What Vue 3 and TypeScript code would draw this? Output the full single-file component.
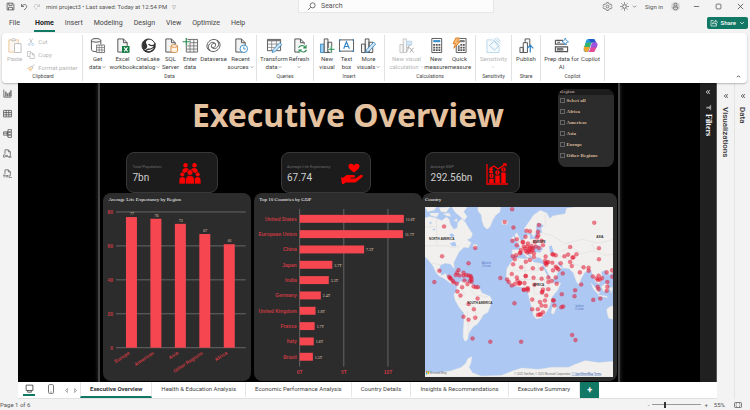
<script setup lang="ts">
import { ref } from 'vue'

interface RibbonItem { icon: string; lines: string[]; caret?: boolean; disabled?: boolean }
interface RibbonGroup { key: string; title: string; items: RibbonItem[] }

const S = '#505050'
const page = `<path d="M3 1h6l4 4v10H3z" fill="#f4f4f4" stroke="${S}"/><path d="M9 1v4h4" fill="none" stroke="${S}"/>`

const icons: Record<string, string> = {
  save: `<path d="M2 2h10l2 2v10H2z" fill="none" stroke="${S}" stroke-width="1.4"/><path d="M5 2v4h6V2M4.500 14V9.500h7V14" fill="none" stroke="${S}" stroke-width="1.4"/>`,
  undo: `<path d="M3 2v5h5M3.500 6.500C6 3 9 2.500 11 3.500c3 1.500 3 5 1 7L8 14" fill="none" stroke="#444" stroke-width="1.4"/>`,
  redo: `<path d="M13 2v5H8M12.500 6.500C10 3 7 2.500 5 3.500c-3 1.500-3 5-1 7L8 14" fill="none" stroke="#bbb" stroke-width="1.4"/>`,
  search: `<circle cx="10" cy="6" r="4.500" fill="none" stroke="#444" stroke-width="1.300"/><path d="M6.500 9.500L1.500 14.500" stroke="#444" stroke-width="1.300"/>`,
  gear: `<path d="M6.500 1h3l.6 2 2.200 1.200 2-.5 1.500 2.600L14.400 8l1.400 1.700-1.500 2.600-2-.5L10.100 13l-.6 2h-3l-.6-2-2.200-1.200-2 .5L.2 9.700 1.600 8 .2 6.300l1.500-2.600 2 .5L5.900 3z" fill="none" stroke="#555" stroke-width="1.200"/><circle cx="8" cy="8" r="2.400" fill="none" stroke="#555" stroke-width="1.200"/>`,
  sun: `<circle cx="8" cy="8" r="3.300" fill="none" stroke="#444" stroke-width="1.300"/><path d="M8 .5v2.500M8 13v2.500M.5 8H3M13 8h2.500M2.700 2.700l1.700 1.700M11.600 11.600l1.700 1.700M2.700 13.300l1.700-1.700M11.600 4.400l1.700-1.700" stroke="#444" stroke-width="1.300"/>`,
  chevron: `<path d="M3 5.500l5 5 5-5" fill="none" stroke="currentColor" stroke-width="2"/>`,
  chevronUp: `<path d="M3 10.500l5-5 5 5" fill="none" stroke="#222" stroke-width="2.400"/>`,
  avatar: `<circle cx="8" cy="8" r="8" fill="#d6d6d6"/><circle cx="8" cy="4.800" r="2.600" fill="none" stroke="#555" stroke-width="1.200"/><path d="M3.800 9h8.400c0 3.500-1.500 4.800-4.200 4.800S3.800 12.500 3.800 9z" fill="none" stroke="#555" stroke-width="1.200"/>`,
  minimise: `<path d="M2 8h12" stroke="#444" stroke-width="1.600"/>`,
  maximise: `<rect x="2.500" y="2.500" width="11" height="11" rx="2" fill="none" stroke="#444" stroke-width="1.600"/>`,
  close: `<path d="M2 2l12 12M14 2L2 14" stroke="#333" stroke-width="1.600"/>`,
  share: `<path d="M7 3H2v11h11v-4M5 10c.5-4 3-5 6-5V2l4 4.500-4 4V8C8.500 8 6.500 8.500 5 10z" fill="none" stroke="#fff" stroke-width="1.300"/>`,
  paste: `<path d="M2 2h10v13H2z" fill="#fdf7ef" stroke="#ecc898"/><path d="M5 2c0-2 4-2 4 0v1H5z" fill="#fff" stroke="#bbb"/><path d="M8 6h7v9.500H8z" fill="#fff" stroke="#bdbdbd"/>`,
  cut: `<path d="M4.500 1l6 10M11.500 1l-6 10" stroke="#aaa" stroke-width="1.200"/><circle cx="4.500" cy="13" r="2" fill="none" stroke="#9cc3e6" stroke-width="1.200"/><circle cx="11.500" cy="13" r="2" fill="none" stroke="#9cc3e6" stroke-width="1.200"/>`,
  copy: `<path d="M6 11H1V1h6v3" fill="none" stroke="#aaa" stroke-width="1.200"/><path d="M6 4h5l3.500 3.500V15H6zM11 4v4h3.500" fill="none" stroke="#aaa" stroke-width="1.200"/>`,
  brush: `<path d="M15 1l-5 5M8 4l4 4-3 2-3-3z" fill="none" stroke="#b9b9b9" stroke-width="1.600"/><path d="M6 6L1 8l6 7 3-5z" fill="#f8ddb8" stroke="#ecc898"/>`,
  getData: `<ellipse cx="6.500" cy="2.500" rx="5" ry="2" fill="#f4f4f4" stroke="${S}"/><path d="M1.500 2.500v10c0 1.200 2 2 5 2M11.500 2.500V7" fill="none" stroke="${S}"/><path d="M7 7.500h8.500V15.500H7z" fill="#fff" stroke="#777"/><path d="M7 10.200h8.500M7 12.800h8.500M9.800 7.500v8M12.600 7.500v8" stroke="#777" stroke-width=".8"/>`,
  excel: page + `<path d="M7.500 8.500h8v7.300h-8z" fill="#107c41"/><path d="M9.800 10l3.600 4.300M13.400 10l-3.600 4.300" stroke="#fff" stroke-width="1.200"/>`,
  oneLake: `<circle cx="8" cy="8" r="7" fill="#fff" stroke="#333"/><path d="M3 12.800C7 11 7.500 9 5.500 5.500 4.500 3.500 7 1.500 9.500 1.200 5 .5 1 4 1.200 8.500c0 2 .8 3.500 1.800 4.300z" fill="#333"/><path d="M7 12c3 0 7-1.500 7.800-5C13 8.500 10 8.500 8 6.500M7 12c-1 1-2 1.500-3 1.600 4 3 10 .6 11-5" fill="none" stroke="#333" stroke-width="1.400"/>`,
  sql: page + `<path d="M8.500 8.500v5.500c0 2 7 2 7 0V8.500z" fill="#fff3e4" stroke="#d98a3d"/><ellipse cx="12" cy="8.500" rx="3.500" ry="1.400" fill="#fff" stroke="#d98a3d"/>`,
  enter: `<path d="M3.500 1.500h12v13.500h-12z" fill="#f5f5f5" stroke="#666"/><path d="M3.500 5h12M3.500 8.400h12M3.500 11.800h12M7.500 1.500V15M11.500 1.500V15" stroke="#666" stroke-width=".8"/><path d="M3.500 0v8M-.5 4h8" stroke="#fff" stroke-width="2.400"/><path d="M3.500 0v8M-.5 4h8" stroke="#2f8f55" stroke-width="1.300"/>`,
  dataverse: `<path d="M10.500 7c-1.800-2.300-5-.8-4.700 1.800.3 2.800 4.200 3.500 6.500.8C15 6.200 12.500 1.500 8.600 1.500 4.500 1.500 1 4.800 1 8.800c0 2.500 1.600 4.200 3.500 4.800M5.500 9c1.800 2.300 5 .8 4.700-1.800C9.900 4.400 6 3.700 3.700 6.400 1 9.800 3.500 14.500 7.400 14.500c4.100 0 7.600-3.300 7.600-7.300 0-2.500-1.600-4.200-3.500-4.800" fill="none" stroke="${S}" stroke-width="1"/>`,
  recent: page + `<circle cx="11.500" cy="11.500" r="4" fill="#fff" stroke="#3b8fc9"/><path d="M11.500 9v2.700h2" fill="none" stroke="#3b8fc9"/>`,
  transform: `<path d="M.5 1.500h14v12H.5z" fill="#fff" stroke="#555"/><path d="M.5 1.500h14v2H.5z" fill="#777"/><path d="M.5 6.500h14M.5 10h14M5 3v10.500M10 3v10.500" stroke="#777" stroke-width=".8"/><path d="M6.500 12.500l7-7.500 2.200 2-7 7.500-3.200 1z" fill="#cfe4f5" stroke="#3b8fc9" stroke-width=".9"/>`,
  refresh: page + `<circle cx="11" cy="11.500" r="5" fill="#fff"/><path d="M7 10.500c1-3 5.500-3.300 7-.5M15 7.500V10.500h-3M15.500 12.500c-1 3-5.500 3.300-7 .5M7.500 15.800v-3h3" fill="none" stroke="#2f8f55" stroke-width="1.200"/>`,
  newVisual: `<path d="M.5 6.500h4v9h-4z" fill="#9ccbee" stroke="#3b8fc9"/><path d="M4.500 1h4v14.500h-4zM8.500 4.500h4v11h-4z" fill="#f4f4f4" stroke="${S}"/><path d="M12 8.500v7M8.500 12h7" stroke="#fff" stroke-width="2.600"/><path d="M12 8.500v7M8.500 12h7" stroke="#2f8f55" stroke-width="1.200"/>`,
  textBox: `<path d="M.5 2h15v12H.5z" fill="#fff" stroke="#555"/><path d="M5 11.500l3-7.500 3 7.500M6 9h4" fill="none" stroke="#2f83c5" stroke-width="1.200"/><path d="M0 1.200h1.600v1.600H0zM14.400 1.200H16v1.600h-1.600zM0 13.200h1.600v1.600H0zM14.400 13.200H16v1.600h-1.600z" fill="#2f83c5"/>`,
  moreVisuals: `<path d="M.5 6.500h4v9h-4zM4.500 1h4v14.500h-4zM8.500 4.500h4v11h-4z" fill="#f4f4f4" stroke="${S}"/><path d="M6 12.500l7.500-8 2.200 2-7.500 8-3.200 1z" fill="#cfe4f5" stroke="#3b8fc9" stroke-width=".9"/>`,
  newCalc: `<path d="M1 7h3.500v8.500H1zM4.500 1H8v14.500H4.500z" fill="#f7f7f7" stroke="#c4c4c4"/><path d="M8 3.500h5.500v4H8z" fill="#d5e7f5" stroke="#b5d4ec"/><path d="M12 8c-2-.5-2 1-2.300 3s-.5 4-2.200 3.500M8.500 10.500h3M11.500 10.500l4 5M15.500 10.500l-4 5" fill="none" stroke="#aaa"/>`,
  calculator: `<path d="M3 .5h10.500v15H3z" fill="#fff" stroke="#555"/><path d="M4.500 2.200h7.500v2.300H4.500z" fill="#3b8fc9"/><path d="M4.500 6.500h2v1.800h-2zM7.300 6.500h2v1.800h-2zM10.100 6.500h2v1.800h-2zM4.500 9.300h2v1.800h-2zM7.300 9.300h2v1.800h-2zM10.100 9.300h2v1.800h-2zM4.500 12.100h2v1.800h-2zM7.300 12.100h2v1.800h-2zM10.100 12.100h2v1.800h-2z" fill="#555"/>`,
  quick: `<path d="M4.500 .5H15v15H4.500z" fill="#fff" stroke="#555"/><path d="M8 2.200h5.500v2.300H8z" fill="#777"/><path d="M6.200 8h2v1.400h-2zM8.900 6.500h2v1.800h-2zM11.600 6.500h2v1.800h-2zM6.200 9.900h2v1.600h-2zM8.900 9.300h2v1.800h-2zM11.600 9.300h2v1.800h-2zM6.200 12.100h2v1.800h-2zM8.900 12.100h2v1.800h-2zM11.600 12.100h2v1.800h-2z" fill="#555"/><path d="M4 0h4L6 4h2.500L2 11l1.500-5H1z" fill="#f9b872" stroke="#dd7a1d" stroke-width=".9"/>`,
  sensitivity: `<path d="M1 2h7l6 8v5.500H1z" fill="#f5fafd" stroke="#b9d8ec"/><path d="M4 8l5-5 5 5-5 5zM9 0l6 6M11.500-.5l4 4" fill="none" stroke="#9fcae6"/>`,
  publish: `<path d="M1 10h3.500v5.500H1zM4.500 5H9v10.500H4.500zM6.500 5V1h5v8" fill="#fafafa" stroke="${S}"/><path d="M12 15.500V8M8.800 11L12 7.700 15.200 11" fill="none" stroke="#2f83c5" stroke-width="1.300"/>`,
  prep: `<path d="M1.500 2.500h8M1.500 2.500v4h12M1.500 9.500h13v5h-13zM3.500 4.500h3" fill="none" stroke="#555" stroke-width="1.200"/><path d="M3 10.500h7v3H3z" fill="#777"/><path d="M12 0l1 2.500L15.500 4 13 5l-1 2.500L11 5 8.500 4 11 2.500z" fill="#fff" stroke="#3b8fc9" stroke-width=".9"/>`,
  copilot: `<path d="M5.500 1h5.300c1.300 0 2 .9 2.300 2l.6 2h-3c-1.200 0-1.900.7-2.300 1.900L6.700 12C6 14 5.300 15 3.800 15H3c-2.300 0-2.700-2-2-4.300l1.900-6.500C3.500 2.200 4 1 5.500 1z" fill="#2b9be0"/><path d="M1 8.500l-.2 3C.8 14 2 15 3.500 15c1.700 0 2.400-1.200 3-3.200L7.700 8z" fill="#f0a52c"/><path d="M3 5L1.500 9.500h5.700L9 4.500z" fill="#35b56b"/><path d="M10.500 15H5.200c1.200-.4 1.800-1.500 2.200-3l1.900-5.500C9.800 5 10.800 4.500 12 4.500h1c2.300 0 2.700 2 2 4.300l-1.900 4C12.500 14.500 12 15 10.500 15z" fill="#e4489a"/><path d="M12 4.500h1c2.500 0 2.700 2 2 4.300l-.6 1.200H8.200l1.200-3.500C9.800 5 10.800 4.500 12 4.500z" fill="#9a55dd"/><path d="M6 1h4.800c1.300 0 2 .9 2.300 2l.5 1.600H8z" fill="#2458c9"/>`,
  report: `<path d="M1.500 1v13.500h13" fill="none" stroke="#555" stroke-width="1.400"/><path d="M4 5h2v8H4zM7.300 8h2v5h-2zM10.600 6h1.600v7h-1.600zM13 2.500h2V13h-2z" fill="#777" stroke="#555" stroke-width=".5"/>`,
  table: `<path d="M1 2.500h14v11.500H1zM1 6.300h14M1 10.200h14M5.700 2.500V14M10.300 2.500V14" fill="none" stroke="#555" stroke-width="1.400"/>`,
  model: `<path d="M1 5h6v6H1zM9 1h6v4H9zM9 6h6v4H9zM9 11h6v4H9zM1 7.500h6M7 8h2M8 3v10h1" fill="none" stroke="#555" stroke-width="1.300"/>`,
  dax: `<path d="M3.500 9V1.500h6L13 5v9H9M9.500 1.500V5H13" fill="none" stroke="#555" stroke-width="1.300"/><path d="M1 10.500h2c2 0 2 4 0 4H1zM5.500 14.500l1.500-4 1.500 4M10 14.500h5" fill="none" stroke="#555" stroke-width="1.200"/>`,
  tmdl: `<path d="M3.500 9V1.500h6L13 5v7M9.500 1.500V5H13" fill="none" stroke="#555" stroke-width="1.300"/><path d="M0 11h4M2 11v4M5.500 15v-4l1.500 2 1.500-2v4M11 11v4h4.500" fill="none" stroke="#555" stroke-width="1.200"/>`,
  monitor: `<path d="M2 2h12v9.500H2zM5.500 11.500L4.500 14.500h7l-1-3" fill="none" stroke="#444" stroke-width="1.500"/>`,
  phone: `<rect x="4" y="1" width="8" height="14" rx="1.500" fill="#fff" stroke="#777" stroke-width="1.600"/><path d="M6.500 12.800h3" stroke="#777"/>`,
  left: `<path d="M10 3.500L5.500 8l4.500 4.500z" fill="none" stroke="#777" stroke-width="1.400"/>`,
  right: `<path d="M6 3.500L10.500 8 6 12.500z" fill="none" stroke="#777" stroke-width="1.400"/>`,
  collapse: `<path d="M8 3L3.500 8 8 13M13 3L8.500 8l4.500 5" fill="none" stroke="currentColor" stroke-width="2"/>`,
  filter: `<path d="M14 1v14L9 10H3V6h6z" fill="#999"/>`,
  fit: `<rect x="1" y="3" width="14" height="10" rx="1.500" fill="none" stroke="#555" stroke-width="1.500"/><path d="M4 7V5.500h2M12 7V5.500h-2M4 9v1.500h2M12 9v1.500h-2" fill="none" stroke="#555" stroke-width="1.200"/>`,
  people: `<g fill="#f00"><circle cx="6.500" cy="2.300" r="2.200"/><circle cx="15.500" cy="2.300" r="2.200"/><path d="M3 11c0-4 1-6 3.500-6S10 6 10.500 8zM19 11c0-4-1-6-3.500-6S12 6 11.500 8z"/></g><g fill="#f00" stroke="#1c1c1c" stroke-width=".7"><circle cx="3.300" cy="11.500" r="2.400"/><circle cx="18.700" cy="11.500" r="2.400"/><path d="M0 21v-3c0-3 1.200-4.300 3.300-4.300S7 15 7 18v3zM15 21v-3c0-3 1.600-4.300 3.700-4.300S22 15 22 18v3z"/><circle cx="11" cy="9.500" r="2.900"/><path d="M6.500 21v-3.500c0-3.500 1.500-5 4.500-5s4.500 1.500 4.500 5V21z"/></g>`,
  heartHand: `<path d="M13 9.500C9 6.500 7.500 5 7.500 3.200 7.500.5 11.500 0 13 2.500 14.500 0 18.500.5 18.500 3.200c0 1.800-1.500 3.300-5.500 6.300z" fill="#f00"/><path d="M0 14.500h2.500l3-2.500h7c2 0 2 2.600 0 2.600H9.500v.8h5l5-3.400c1.500-1 3.200.8 1.900 2l-6 4.800c-.8.600-1.500.8-2.500.8H4.500L2.500 21H1z" fill="#f00"/>`,
  gdp: `<g fill="none" stroke="#f00" stroke-width="1.300"><path d="M1 1v20h21"/><path d="M4 5.500l4-2.500 4 3L20 1M17 1h3v2.500"/></g><g fill="#f00"><circle cx="5" cy="6.300" r="1.800"/><path d="M3 10V9c0-2 4-2 4 0v1z"/><circle cx="5.500" cy="12.800" r="2.200"/><circle cx="11.500" cy="9.500" r="2.200"/><circle cx="17.500" cy="6.500" r="2.200"/><path d="M3.300 15.700h4.400V20H3.300zM9.300 12.500h4.400V20H9.300zM15.300 9.500h4.400V20h-4.400z"/></g><g stroke="#1c1c1c" stroke-width=".7"><path d="M5.500 11.500v2.600M11.500 8.200v2.600M17.500 5.200v2.600"/></g>`,
}

const menu = ['File', 'Home', 'Insert', 'Modeling', 'Design', 'View', 'Optimize', 'Help']
const activeMenu = ref('Home')

const clipboard = [
  { icon: 'cut', label: 'Cut' },
  { icon: 'copy', label: 'Copy' },
  { icon: 'brush', label: 'Format painter' },
]

const groups: RibbonGroup[] = [
  { key: 'data', title: 'Data', items: [
    { icon: 'getData', lines: ['Get', 'data'], caret: true },
    { icon: 'excel', lines: ['Excel', 'workbook'] },
    { icon: 'oneLake', lines: ['OneLake', 'catalog'], caret: true },
    { icon: 'sql', lines: ['SQL', 'Server'] },
    { icon: 'enter', lines: ['Enter', 'data'] },
    { icon: 'dataverse', lines: ['Dataverse'] },
    { icon: 'recent', lines: ['Recent', 'sources'], caret: true },
  ] },
  { key: 'queries', title: 'Queries', items: [
    { icon: 'transform', lines: ['Transform', 'data'], caret: true },
    { icon: 'refresh', lines: ['Refresh', ''], caret: true },
  ] },
  { key: 'insert', title: 'Insert', items: [
    { icon: 'newVisual', lines: ['New', 'visual'] },
    { icon: 'textBox', lines: ['Text', 'box'] },
    { icon: 'moreVisuals', lines: ['More', 'visuals'], caret: true },
  ] },
  { key: 'calc', title: 'Calculations', items: [
    { icon: 'newCalc', lines: ['New visual', 'calculation'], caret: true, disabled: true },
    { icon: 'calculator', lines: ['New', 'measure'] },
    { icon: 'quick', lines: ['Quick', 'measure'] },
  ] },
  { key: 'sens', title: 'Sensitivity', items: [
    { icon: 'sensitivity', lines: ['Sensitivity', ''], caret: true, disabled: true },
  ] },
  { key: 'publish', title: 'Share', items: [{ icon: 'publish', lines: ['Publish'] }] },
  { key: 'copilot', title: 'Copilot', items: [
    { icon: 'prep', lines: ['Prep data for', 'AI'] },
    { icon: 'copilot', lines: ['Copilot'] },
  ] },
]

const views = [
  { icon: 'report', label: 'Report view' },
  { icon: 'table', label: 'Table view' },
  { icon: 'model', label: 'Model view' },
  { icon: 'dax', label: 'DAX query view' },
  { icon: 'tmdl', label: 'TMDL view' },
]

const cards = [
  { key: 'pop', label: 'Total Population', value: '7bn', icon: 'people' },
  { key: 'life', label: 'Average Life Expectancy', value: '67.74', icon: 'heartHand' },
  { key: 'gdp', label: 'Average GDP', value: '292.56bn', icon: 'gdp' },
]

const regions = ['Select all', 'Africa', 'Americas', 'Asia', 'Europe', 'Other Regions']

const lifeByRegion = [
  { name: 'Europe', value: 77 },
  { name: 'Americas', value: 76 },
  { name: 'Asia', value: 73 },
  { name: 'Other Regions', value: 67 },
  { name: 'Africa', value: 61 },
]
const lifeTicks = [80, 60, 40, 20, 0]
const lifeY = (v: number) => 155 - v * 1.7
const lifeX = (i: number) => 23 + i * 24.5

const gdpByCountry = [
  { name: 'United States', value: 11.8 },
  { name: 'European Union', value: 11.7 },
  { name: 'China', value: 7.3 },
  { name: 'Japan', value: 3.7 },
  { name: 'India', value: 3.3 },
  { name: 'Germany', value: 2.4 },
  { name: 'United Kingdom', value: 1.8 },
  { name: 'France', value: 1.7 },
  { name: 'Italy', value: 1.6 },
  { name: 'Brazil', value: 1.5 },
]
const gdpTicks = [0, 5, 10]
const gdpX = (v: number) => 46 + v * 8.9
const gdpY = (i: number) => 22 + i * 15.45

const land = [
  'M0 34L14 28 34 32 52 40 66 30 74 36 78 52 88 66 98 62 100 46 112 34 124 48 132 62 144 80 140 92 128 98 140 106 132 122 118 120 104 134 96 150 88 166 90 184 84 178 78 170 62 168 48 174 44 190 52 204 64 198 68 208 76 214 82 226 92 228 90 234 76 226 60 214 44 206 34 194 26 176 12 158 0 146Z',
  'M2 0L36 0 30 10 10 14ZM44 2L76 0 66 16 50 14ZM82 0L128 0 118 14 128 28 120 40 104 26 92 16ZM16 18L44 18 38 30 20 26ZM56 20L74 18 80 28 66 26ZM88 40L98 34 98 44Z',
  'M160 0L228 0 226 14 212 26 204 40 196 60 188 66 178 58 172 42 170 24 160 12Z',
  'M230 44L240 38 250 44 246 52 234 52Z',
  'M146 112L158 112 156 122 146 120ZM96 192L116 198 130 206 120 204 104 198Z',
  'M98 232L108 222 122 222 136 226 150 236 166 244 172 256 196 266 202 276 198 294 190 314 176 322 168 336 158 350 148 356 138 368 132 380 130 394 122 402 116 390 116 370 118 340 118 316 104 300 92 278 88 262 96 250Z',
  'M0 492L40 494 80 488 110 478 124 466 130 452 142 446 140 462 134 478 144 494 170 504 230 502 260 490 290 480 340 484 380 478 430 478 452 468 480 458 520 464 564 460 564 507 0 507Z',
  'M246 184L262 160 272 152 300 154 318 152 326 164 346 168 358 172 370 196 378 212 388 228 408 226 398 248 380 270 376 292 366 312 350 330 334 334 326 324 320 300 312 270 308 252 296 240 270 236 254 226 244 208Z',
  'M390 290L394 300 386 320 378 316 382 298Z',
  'M262 144L262 128 284 126 286 116 276 108 288 102 300 94 304 84 314 82 316 96 334 94 340 80 352 76 348 64 356 56 346 48 336 54 334 74 326 90 318 76 306 78 298 64 308 50 326 24 346 10 366 18 374 34 384 26 420 20 424 4 450 0 564 0 564 196 548 202 540 188 528 194 532 214 520 230 510 222 502 202 496 186 478 196 468 214 462 232 454 224 444 196 432 184 416 182 402 186 392 212 372 220 366 190 358 166 346 152 336 150 328 158 316 144 304 126 308 142 316 150 306 150 290 132 282 146Z',
  'M274 96L270 84 276 76 284 92 288 102 274 104ZM262 88L270 90 266 98 260 98Z',
  'M496 226L508 238 524 258 518 260 504 244ZM520 262L546 266 546 270 520 266ZM528 236L546 226 550 248 534 252ZM552 240L562 240 558 258Z',
  'M544 304L556 296 564 294 564 336 550 332 546 320Z',
]
const water = [
  'M316 118L340 114 354 124 346 136 328 134ZM336 48L342 46 340 70 334 66ZM372 118L380 114 386 134 380 142 374 130Z',
  'M350 172L356 174 378 214 372 214ZM398 162L414 178 410 182 398 170Z',
  'M74 82L82 78 90 84 84 92ZM14 46L22 44 20 52ZM24 66L34 64 30 70ZM76 108L92 104 96 116 84 118Z',
]
const borders = [
  'M0 116H70L86 122 106 118 M22 168L48 172 M0 60L30 58 M36 32L38 116',
  'M106 232L120 260 100 276 M138 244L150 262 190 268 M118 290L146 296 158 330 134 352 M128 310L132 380',
  'M258 190L340 190 340 160 M300 154V240 M280 216H380 M318 216L330 260 366 262 M312 282H356 M334 300V330 M358 216L364 250',
  'M346 76L380 84 420 110 470 96 520 108 564 96 M410 130L440 120 470 140 500 130 540 144 564 140 M420 150L448 170 480 182 M300 108L340 104 M382 152L410 148 M500 110L510 130 M360 20L362 60',
]

const points: number[][] = [
  [59, 58], [53, 147], [45, 190], [30, 224], [152, 122], [132, 168], [94, 203], [102, 188], [117, 196], [117, 204], [105, 204], [98, 196], [74, 208], [79, 214], [85, 220], [77, 212], [88, 225], [97, 229], [125, 203], [132, 204], [138, 206], [140, 210], [141, 216], [136, 221], [141, 223], [120, 219], [129, 230], [113, 239], [147, 237], [154, 239], [160, 239], [99, 252], [108, 264], [159, 273], [132, 289], [148, 305], [117, 327], [132, 336], [152, 330], [144, 392], [197, 402], [289, 402], [269, 287], [227, 212], [240, 45], [262, 7], [266, 61], [263, 101], [276, 96], [276, 114], [264, 147], [270, 156], [265, 171], [289, 180], [303, 163], [247, 216], [252, 224], [261, 200], [261, 234], [276, 210], [278, 220], [270, 230], [282, 229], [286, 226], [297, 247], [302, 206], [305, 71], [302, 89], [294, 104], [285, 138], [274, 144],
  [315, 72], [342, 54], [339, 74], [340, 84], [337, 91], [294, 106], [309, 109], [320, 116], [297, 118], [312, 126], [322, 129], [332, 118], [330, 104], [350, 101], [354, 114], [342, 122], [302, 131], [287, 136], [307, 136], [317, 134], [327, 138], [327, 149], [308, 118], [316, 122], [324, 124], [312, 132], [300, 124], [288, 128], [362, 148], [382, 141], [392, 144], [385, 142], [315, 158], [370, 164], [360, 161], [364, 172], [362, 168], [366, 166], [382, 166], [384, 189], [392, 178], [400, 186], [396, 182], [407, 168], [413, 198], [350, 184], [324, 183], [303, 206], [326, 211], [350, 214], [370, 210], [370, 224], [380, 221], [392, 210], [395, 229], [285, 227], [299, 227], [370, 245], [354, 246], [351, 255], [352, 253], [364, 264], [297, 247], [309, 249], [307, 244], [309, 242], [329, 232], [322, 276], [360, 279], [345, 283], [350, 294], [362, 295], [384, 278], [386, 279], [388, 294], [409, 299], [414, 297], [322, 305], [339, 305], [354, 314], [339, 322], [348, 321], [344, 320], [410, 260], [450, 248], [448, 266], [468, 231], [504, 277], [525, 273], [441, 382], [451, 397], [507, 47], [435, 119], [429, 142], [418, 147], [445, 150], [442, 151], [435, 164], [454, 141], [440, 176], [521, 123], [521, 156], [464, 195], [475, 180], [490, 181], [490, 190], [503, 207], [514, 213], [520, 205], [524, 216], [518, 218], [530, 212], [544, 195], [560, 189], [561, 208], [546, 224], [546, 238], [544, 250], [517, 238], [520, 245],
]

const pages = ['Executive Overview', 'Health & Education Analysis', 'Economic Performance Analysis', 'Country Details', 'Insights & Recommendations', 'Executive Summary']
const activePage = ref(pages[0])
const zoom = ref(55)
</script>

<template>
  <div class="app">
    <header class="titlebar">
      <div class="quick">
        <button class="icon-btn" aria-label="Save"><svg class="ic9" viewBox="0 0 16 16" v-html="icons.save" /></button>
        <button class="icon-btn" aria-label="Undo"><svg class="ic8" viewBox="0 0 16 16" v-html="icons.undo" /></button>
        <button class="icon-btn" aria-label="Redo"><svg class="ic8" viewBox="0 0 16 16" v-html="icons.redo" /></button>
        <span class="doc">mini project3 • Last saved: Today at 12:54 PM</span>
        <span class="doc-caret">▽</span>
      </div>
      <label class="search">
        <svg class="ic9" viewBox="0 0 16 16" v-html="icons.search" />
        <input type="text" placeholder="Search" aria-label="Search">
      </label>
      <div class="account">
        <button class="icon-btn" aria-label="Settings"><svg class="ic9" viewBox="0 0 16 16" v-html="icons.gear" /></button>
        <button class="icon-btn theme" aria-label="Theme">
          <svg class="ic9" viewBox="0 0 16 16" v-html="icons.sun" /><svg class="ic5" viewBox="0 0 16 16" v-html="icons.chevron" />
        </button>
        <button class="icon-btn">Sign in</button>
        <svg class="ic9" viewBox="0 0 16 16" v-html="icons.avatar" />
      </div>
      <div class="window">
        <button class="icon-btn" aria-label="Minimise"><svg class="ic7" viewBox="0 0 16 16" v-html="icons.minimise" /></button>
        <button class="icon-btn" aria-label="Maximise"><svg class="ic7" viewBox="0 0 16 16" v-html="icons.maximise" /></button>
        <button class="icon-btn" aria-label="Close"><svg class="ic7" viewBox="0 0 16 16" v-html="icons.close" /></button>
      </div>
    </header>

    <nav class="menubar">
      <button v-for="m in menu" :key="m" class="menu" :class="{ active: m === activeMenu }" @click="activeMenu = m">{{ m }}</button>
      <button class="share"><svg class="ic8" viewBox="0 0 16 16" v-html="icons.share" />Share<svg class="ic6" viewBox="0 0 16 16" v-html="icons.chevron" /></button>
    </nav>

    <section class="ribbon">
      <div class="group clip">
        <div class="clip-body">
          <button class="paste" disabled><svg class="ic15" viewBox="0 0 16 16" v-html="icons.paste" />Paste</button>
          <div class="clip-list">
            <button v-for="c in clipboard" :key="c.label" class="clip-item" disabled>
              <svg class="ic8" viewBox="0 0 16 16" v-html="icons[c.icon]" />{{ c.label }}
            </button>
          </div>
        </div>
        <span class="group-title">Clipboard</span>
      </div>
      <div v-for="g in groups" :key="g.key" class="group" :class="g.key">
        <div class="items">
          <button v-for="it in g.items" :key="it.icon" class="item" :disabled="it.disabled">
            <svg class="ic15" viewBox="0 0 16 16" v-html="icons[it.icon]" />
            <span v-for="(l, i) in it.lines" :key="i" class="line">{{ l }}<svg v-if="it.caret && i === it.lines.length - 1" class="ic4" viewBox="0 0 16 16" v-html="icons.chevron" /></span>
          </button>
        </div>
        <span class="group-title">{{ g.title }}</span>
      </div>
      <button class="icon-btn collapse-ribbon" aria-label="Collapse ribbon"><svg class="ic5" viewBox="0 0 16 16" v-html="icons.chevronUp" /></button>
    </section>

    <div class="body">
      <aside class="rail">
        <button v-for="v in views" :key="v.icon" class="icon-btn" :aria-label="v.label"><svg class="ic9" viewBox="0 0 16 16" v-html="icons[v.icon]" /></button>
      </aside>

      <div class="center">
        <div class="stage">
          <div class="workspace">
            <main class="report">
              <div class="top">
                <div class="lead">
                  <h1>Executive Overview</h1>
                  <div class="cards">
                    <div v-for="c in cards" :key="c.key" class="card" :class="c.key">
                      <div class="card-text">
                        <span class="card-label">{{ c.label }}</span>
                        <span class="card-value">{{ c.value }}</span>
                      </div>
                      <svg class="ic22" viewBox="0 0 22 22" v-html="icons[c.icon]" />
                    </div>
                  </div>
                </div>
                <fieldset class="slicer">
                  <legend>Region</legend>
                  <label v-for="r in regions" :key="r"><input type="checkbox">{{ r }}</label>
                </fieldset>
              </div>

              <div class="panels">
                <section class="panel life-panel">
                  <h2>Average Life Expectancy by Region</h2>
                  <svg class="chart" viewBox="0 0 148 188">
                    <g v-for="t in lifeTicks" :key="t">
                      <line x1="13" x2="143" :y1="lifeY(t)" :y2="lifeY(t)" class="grid" />
                      <text x="10" :y="lifeY(t) + 2" class="axis end">{{ t }}</text>
                    </g>
                    <g v-for="(d, i) in lifeByRegion" :key="d.name">
                      <rect :x="lifeX(i)" :y="lifeY(d.value)" width="11" :height="155 - lifeY(d.value)" class="bar" />
                      <text :x="lifeX(i) + 6" :y="lifeY(d.value) - 2" class="value mid">{{ d.value }}</text>
                      <text :transform="`translate(${lifeX(i) + 4} 161) rotate(-34)`" class="axis end">{{ d.name }}</text>
                    </g>
                  </svg>
                </section>
                <section class="panel gdp-panel">
                  <h2>Top 10 Countries by GDP</h2>
                  <svg class="chart" viewBox="0 0 169 188">
                    <g v-for="t in gdpTicks" :key="t">
                      <line :x1="gdpX(t)" :x2="gdpX(t)" y1="16" y2="175" class="grid" />
                      <text :x="gdpX(t)" y="182" class="axis mid">{{ t }}T</text>
                    </g>
                    <g v-for="(d, i) in gdpByCountry" :key="d.name">
                      <text x="43" :y="gdpY(i) + 6" class="axis end">{{ d.name }}</text>
                      <rect :x="gdpX(0)" :y="gdpY(i)" :width="gdpX(d.value) - gdpX(0)" height="8" class="bar" />
                      <text :x="gdpX(d.value) + 2" :y="gdpY(i) + 6" class="value">{{ d.value }}T</text>
                    </g>
                  </svg>
                </section>
                <section class="panel map-panel">
                  <h2>Country</h2>
                  <svg class="map" viewBox="0 0 564 507" preserveAspectRatio="xMidYMid slice">
                    <rect width="564" height="507" fill="#adc8f2" />
                    <path v-for="(p, i) in land" :key="i" :d="p" class="land" />
                    <path v-for="(p, i) in water" :key="i" :d="p" fill="#adc8f2" />
                    <path v-for="(p, i) in borders" :key="i" :d="p" class="border" />
                    <circle v-for="(p, i) in points" :key="i" :cx="p[0]" :cy="p[1]" r="6" class="point" />
                    <text x="52" y="99" class="continent">NORTH AMERICA</text>
                    <text x="166" y="289" class="continent">SOUTH AMERICA</text>
                    <text x="343" y="108" class="continent">EUROPE</text>
                    <text x="341" y="236" class="continent">AFRICA</text>
                    <text x="524" y="93" class="continent">ASIA</text>
                    <text x="186" y="170" class="ocean">Atlantic</text>
                    <text x="186" y="180" class="ocean">Ocean</text>
                    <text x="463" y="298" class="ocean">Indian</text>
                    <text x="463" y="308" class="ocean">Ocean</text>
                    <g><path d="M5 490h4v4H5z" fill="#f25022" /><path d="M10 490h4v4h-4z" fill="#7fba00" /><path d="M5 495h4v4H5z" fill="#00a4ef" /><path d="M10 495h4v4h-4z" fill="#ffb900" /></g>
                    <text x="16" y="498" class="credit">Microsoft Bing</text>
                    <text x="528" y="500" class="credit end">© 2025 TomTom, © 2025 Microsoft Corporation, <tspan class="link">© OpenStreetMap</tspan> <tspan class="link">Terms</tspan></text>
                  </svg>
                </section>
              </div>
            </main>
          </div>
          <aside class="filters">
            <svg class="ic6" viewBox="0 0 16 16" v-html="icons.collapse" />
            <svg class="ic7" viewBox="0 0 16 16" v-html="icons.filter" />
            <span>Filters</span>
          </aside>
        </div>

        <div class="pages">
          <button class="icon-btn device on" aria-label="Desktop layout"><svg class="ic9" viewBox="0 0 16 16" v-html="icons.monitor" /></button>
          <button class="icon-btn device" aria-label="Mobile layout"><svg class="ic10" viewBox="0 0 16 16" v-html="icons.phone" /></button>
          <button class="icon-btn arrow" aria-label="Previous page"><svg class="ic7" viewBox="0 0 16 16" v-html="icons.left" /></button>
          <button class="icon-btn arrow" aria-label="Next page"><svg class="ic7" viewBox="0 0 16 16" v-html="icons.right" /></button>
          <button v-for="p in pages" :key="p" class="page-tab" :class="{ active: p === activePage }" @click="activePage = p">{{ p }}</button>
          <button class="add" aria-label="New page">+</button>
        </div>
      </div>

      <aside class="pane"><svg class="ic6" viewBox="0 0 16 16" v-html="icons.collapse" /><span>Visualizations</span></aside>
      <aside class="pane"><svg class="ic6" viewBox="0 0 16 16" v-html="icons.collapse" /><span>Data</span></aside>
    </div>

    <footer class="status">
      <span class="page-no">Page 1 of 6</span>
      <button class="icon-btn" aria-label="Zoom out">-</button>
      <input v-model="zoom" class="zoom" type="range" min="10" max="200" aria-label="Zoom">
      <button class="icon-btn" aria-label="Zoom in">+</button>
      <span class="pct">{{ zoom }}%</span>
      <button class="icon-btn" aria-label="Fit to page"><svg class="ic8" viewBox="0 0 16 16" v-html="icons.fit" /></button>
    </footer>
  </div>
</template>

<style>
body { margin: 0; background: #f3f3f3; }
</style>

<style scoped>
.app { min-height: 100vh; display: flex; flex-direction: column; background: #f3f3f3; color: #444; font: 6px/8px Roboto, "Open Sans", sans-serif; }
.app * { box-sizing: border-box; }
button { font: inherit; color: inherit; background: none; border: 0; padding: 0; margin: 0; white-space: nowrap; }
svg { display: block; flex: none; overflow: visible; }
.ic4 { width: 4px; height: 4px; }
.ic5 { width: 5px; height: 5px; }
.ic6 { width: 6px; height: 6px; }
.ic7 { width: 7px; height: 7px; }
.ic8 { width: 8px; height: 8px; }
.ic9 { width: 9px; height: 9px; }
.ic10 { width: 10px; height: 10px; }
.ic15 { width: 15px; height: 15px; }
.ic22 { width: 22px; height: 22px; }
.icon-btn { display: flex; align-items: center; justify-content: center; }

.titlebar { height: 13px; display: flex; align-items: center; justify-content: space-between; padding: 0 6px; color: #555; }
.quick { flex: 292 1 0; display: flex; align-items: center; gap: 5px; }
.doc { white-space: nowrap; }
.doc-caret { font-size: 5px; }
.search { flex: 186 1 0; height: 13px; display: flex; align-items: center; gap: 5px; padding-left: 8px; background: #fcfcfc; border: 1px solid #e6e6e6; border-top: 0; }
.search input { flex: 1; min-width: 0; padding: 0; border: 0; outline: 0; background: none; font: 7px/9px Roboto, "Open Sans", sans-serif; color: #444; }
.search input::placeholder { color: #555; opacity: 1; }
.account { flex: 186 1 0; display: flex; align-items: center; justify-content: flex-end; gap: 8px; }
.theme { gap: 3px; }
.window { flex: 64 1 0; display: flex; align-items: center; justify-content: flex-end; gap: 15px; }

.menubar { height: 20px; display: flex; align-items: center; gap: 9px; padding: 0 2px 0 8px; font-size: 7px; }
.menu { height: 16px; padding: 0 1px; border-bottom: 2px solid transparent; margin-top: 1px; line-height: 14px; }
.menu:first-child { margin-right: 4px; }
.menu.active { font-weight: 700; border-color: #117865; color: #222; }
.share { margin-left: auto; height: 12px; display: flex; align-items: center; gap: 3px; padding: 0 3px; border-radius: 2px; background: #117865; color: #fff; font-size: 6px; font-weight: 500; }

.ribbon { height: 50px; margin: 0 3px 0 2px; padding-left: 2px; display: flex; background: #fff; border-radius: 4px; box-shadow: 0 1px 2px rgba(0, 0, 0, .25); position: relative; z-index: 1; }
.group { margin: 2px 0; border-right: 1px solid #e2e2e2; display: flex; flex-direction: column; justify-content: space-between; align-items: center; padding-top: 3px; }
.group-title { font-size: 5px; line-height: 6px; padding-bottom: 2px; }
.clip { width: 79px; }
.clip-body { display: flex; width: 100%; gap: 5px; padding-left: 3px; }
.clip-body button { color: #b5b5b5; }
.paste { display: flex; flex-direction: column; align-items: center; gap: 2px; }
.clip-list { display: flex; flex-direction: column; gap: 5px; }
.clip-item { display: flex; align-items: center; gap: 3px; height: 8px; }
.items { display: grid; justify-content: center; }
.item { display: flex; flex-direction: column; align-items: center; }
.item .ic15 { margin-bottom: 2px; }
.item:disabled { color: #b5b5b5; }
.line { height: 8px; display: flex; align-items: center; gap: 1px; }
.data { width: 174px; }
.data .items { grid-template-columns: 24px 26px 25px 20px 19px 28px 26px; }
.queries { width: 57px; }
.queries .items { grid-template-columns: 28px 22px; }
.insert { width: 71px; }
.insert .items { grid-template-columns: 20px 19px 25px; }
.calc { width: 91px; }
.calc .items { grid-template-columns: 35px 24px 23px; }
.sens { width: 36px; }
.publish { width: 29px; }
.copilot { width: 64px; }
.copilot .items { grid-template-columns: 36px 22px; }
.collapse-ribbon { margin: auto 6px 4px auto; }

.body { flex: 1; display: flex; min-height: 0; }
.rail { width: 18px; display: flex; flex-direction: column; align-items: center; gap: 11px; padding: 6px 3px 0 0; }
.center { flex: 1; min-width: 0; display: flex; flex-direction: column; }
.stage { flex: 1; display: flex; background: #000; }
.workspace { flex: 1; min-width: 0; display: flex; justify-content: center; }
.report { width: 76.4%; border: solid #444; border-width: 0 2px; box-shadow: 0 0 4px #333; display: flex; flex-direction: column; padding: 0 1px 1px 3px; background: #000; }
.top { height: 110px; display: flex; }
.lead { flex: 1; min-width: 0; display: flex; flex-direction: column; justify-content: space-between; }
h1 { margin: 10px 0 0 35px; text-align: center; font: 700 32px/44px "Noto Sans", "Open Sans", sans-serif; color: #e5c2a0; white-space: nowrap; }
.cards { display: grid; grid-template-columns: 155fr 144fr 95fr; margin: 0 38px 0 23px; }
.card { height: 41px; display: flex; align-items: center; justify-content: space-between; padding: 2px 14px 0 5px; background: #1c1c1c; border: 1px solid #383838; border-radius: 8px; }
.pop { width: 92px; padding-right: 16px; }
.life { width: 90px; padding-right: 7px; }
.gdp { width: 95px; padding-right: 11px; }
.card-text { display: flex; flex-direction: column; gap: 2px; white-space: nowrap; width: 0; }
.card-label { font-size: 4px; line-height: 6px; color: #6c6c6c; }
.card-value { font-size: 10px; line-height: 12px; color: #d0d0d0; }
.slicer { width: 56px; height: 78px; margin: 6px 3px 0 0; padding: 0 0 0 2px; border: 0; border-radius: 8px; background: #2c2c2c; overflow: hidden; font: 700 5px/11px "Liberation Serif", serif; color: #d8b898; }
.slicer legend { float: left; width: 56px; margin-left: -2px; padding: 0 0 0 2px; height: 6px; line-height: 6px; background: #1c1c1c; color: #a08d8d; }
.slicer label { clear: both; display: flex; align-items: center; gap: 2px; height: 11px; }
.slicer input { appearance: none; width: 5px; height: 5px; margin: 0; border: 1px solid #656565; }
.panels { flex: 1; display: grid; grid-template-columns: 151fr 168fr 195fr; }
.panel { background: #2c2c2c; border-radius: 8px; position: relative; min-width: 0; }
.life-panel { margin-right: 3px; }
.gdp-panel { border-radius: 8px 8px 0 8px; }
.map-panel { border-radius: 8px 8px 8px 0; padding: 14px 4px 4px 3px; display: flex; }
h2 { position: absolute; left: 5px; top: 4px; margin: 0; font: 400 5px/6px "Liberation Serif", serif; color: #fff; white-space: nowrap; }
.map-panel h2 { left: 3px; }
.chart { width: 100%; height: auto; }
.map { flex: 1; width: 100%; height: 100%; overflow: hidden; }
.grid { stroke: #666; stroke-width: 1; }
.bar { fill: #f64750; }
.axis { font: 700 5px "Liberation Sans", sans-serif; fill: #c93a42; }
.value { font: 4px "Liberation Serif", serif; fill: #e5d2bd; }
.end { text-anchor: end; }
.mid { text-anchor: middle; }
.land { fill: #f1f0ee; stroke: #d9dde2; stroke-width: 1; }
.border { fill: none; stroke: #cfcfcf; stroke-width: 1; }
.point { fill: #e8112d; fill-opacity: .52; stroke: #d81b33; stroke-opacity: .6; stroke-width: 1; }
.continent { font: 700 9px "Liberation Sans", sans-serif; fill: #333; text-anchor: middle; }
.ocean { font: 9px "Liberation Sans", sans-serif; fill: #5a78c8; text-anchor: middle; }
.credit { font: 8px "Liberation Sans", sans-serif; fill: #666; }
.link { fill: #2a50b0; text-decoration: underline; }

.filters { width: 17px; background: #202020; border-right: 1px solid #555; color: #fff; display: flex; flex-direction: column; align-items: center; gap: 9px; padding-top: 6px; }
.filters span { writing-mode: vertical-rl; font: 700 8px/9px "Liberation Serif", serif; margin-top: -6px; }
.pane { width: 18px; border-right: 1px solid #e4e4e4; display: flex; flex-direction: column; align-items: center; gap: 8px; padding-top: 10px; color: #333; }
.pane:last-child { width: 15px; border-right: 0; }
.pane span { writing-mode: vertical-rl; font-size: 8px; line-height: 9px; font-weight: 500; }

.pages { height: 17px; display: flex; background: #fff; border-bottom: 1px solid #e0e0e0; }
.device { width: 12px; margin: 0 5px 2px; border-bottom: 1px solid transparent; }
.device.on { border-color: #117865; border-bottom-width: 2px; }
.arrow { width: 9px; }
.page-tab { padding: 0 9px; border-right: 1px solid #e6e6e6; border-bottom: 2px solid transparent; color: #444; }
.page-tab.active { border-left: 1px solid #e6e6e6; border-bottom-color: #117865; font-weight: 700; color: #333; }
.add { width: 19px; background: #117865; color: #fff; font-weight: 700; font-size: 9px; }

.status { height: 11px; display: flex; align-items: center; gap: 3px; padding-right: 8px; color: #555; }
.page-no { margin-right: auto; }
.zoom { appearance: none; width: 49px; height: 6px; margin: 0; background: linear-gradient(#999, #999) center / 100% 1px no-repeat; }
.zoom::-webkit-slider-thumb { appearance: none; width: 2px; height: 6px; background: #333; }
.pct { margin: 0 6px 0 3px; }
</style>
